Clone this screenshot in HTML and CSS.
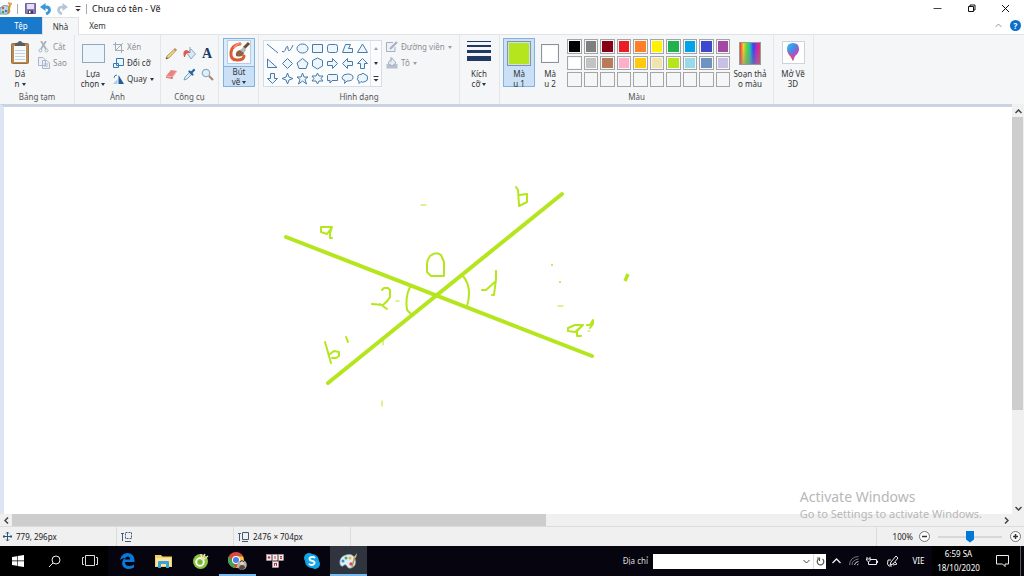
FILE: index.html
```html
<!DOCTYPE html>
<html lang="vi">
<head>
<meta charset="utf-8">
<title>Chưa có tên - Vẽ</title>
<link rel="stylesheet" href="styles.css">
</head>
<body>
<header class="titlebar">
  <svg class="app-icon" width="13" height="14" viewBox="0 0 13 14"><path d="M0 6Q3 2 8 4L10 9Q9 13 4 12L0 12Z" fill="#b9d9ea" stroke="#6f9eb8"/><circle cx="3" cy="6" r="1.3" fill="#d75b35"/><circle cx="3" cy="10" r="1.3" fill="#46a045"/><circle cx="6" cy="9" r="1.2" fill="#3878c3"/><path d="M10 2L8 12" stroke="#d28c32" stroke-width="2"/><path d="M8 1L12 2" stroke="#e4a84d" stroke-width="2"/></svg>
  <span class="bar-sep"></span>
  <button class="quick" aria-label="Lưu"><svg width="11" height="11" viewBox="0 0 11 11"><path d="M.5.5H10.500V10.500H.5Z" fill="#8e78ba" stroke="#75619f"/><path d="M2 1H9V6H2Z" fill="#e4def0"/><path d="M3 7.500H8V10.500H3Z" fill="#3c355c"/><path d="M4 8H5.500V10H4Z" fill="#fff"/></svg></button>
  <button class="quick" aria-label="Hoàn tác"><svg width="12" height="12" viewBox="0 0 12 12"><path d="M3 4H6Q9.500 4 9.500 7Q9.500 9.500 6 11" fill="none" stroke="#3a97d8" stroke-width="2.800"/><path d="M0 4L5.500 0V8Z" fill="#3a97d8"/></svg></button>
  <button class="quick" aria-label="Làm lại"><svg width="12" height="12" viewBox="0 0 12 12"><path d="M9 4H6Q2.500 4 2.500 7Q2.500 9.500 6 11" fill="none" stroke="#b4c6d8" stroke-width="2.600"/><path d="M12 4L6.500 0V8Z" fill="#b4c6d8"/></svg></button>
  <button class="quick" aria-label="Tùy chỉnh"><svg width="6" height="6" viewBox="0 0 6 6"><path d="M.5.5H5.500" stroke="#333"/><path d="M.5 3H5.500L3 5.500Z" fill="#333"/></svg></button>
  <span class="bar-sep"></span>
  <h1 class="title">Chưa có tên - Vẽ</h1>
  <div class="window-buttons">
    <button aria-label="Thu nhỏ"><svg width="9" height="9" viewBox="0 0 9 9"><path d="M.5 4.500H8.500" stroke="#444"/></svg></button>
    <button aria-label="Khôi phục"><svg width="9" height="9" viewBox="0 0 9 9" fill="none" stroke="#111"><path d="M1.500 2.500H6.500V7.500H1.500ZM3 2.500V1H8V6H6.500"/></svg></button>
    <button aria-label="Đóng"><svg width="9" height="9" viewBox="0 0 9 9"><path d="M1 1L8 8M8 1L1 8" stroke="#111"/></svg></button>
  </div>
</header>
<nav class="tabs">
  <button class="tab tab-file">Tệp</button>
  <button class="tab tab-active">Nhà</button>
  <button class="tab">Xem</button>
  <div class="tab-tools">
    <button aria-label="Thu gọn dải băng"><svg width="7" height="5" viewBox="0 0 7 5"><path d="M.5 4L3.500 1L6.500 4" fill="none" stroke="#999"/></svg></button>
    <button class="help" aria-label="Trợ giúp">?</button>
  </div>
</nav>
<section class="ribbon">
  <div class="group g-clip">
    <div class="group-body">
      <button class="big"><svg width="20" height="25" viewBox="0 0 20 25"><rect x="1.500" y="2.500" width="17" height="20" rx="1" fill="#b98a50" stroke="#9a7140"/><rect x="4" y="5" width="12" height="16" fill="#f7fafd"/><path d="M5 9.500H15M5 12.500H15M5 15.500H15M5 18.500H15" stroke="#c3d3e3"/><path d="M5 3Q5 1.500 8 1.500Q8 0 10 0Q12 0 12 1.500Q15 1.500 15 3V5H5Z" fill="#5b5d60"/></svg><span>Dá<br>n <i class="caret"></i></span></button>
      <div class="stack">
        <button class="small off"><svg width="12" height="12" viewBox="0 0 12 12" fill="none" stroke="#a6b2c0"><path d="M3 0L8 8M8 0L3 8" stroke-width="1.800"/><circle cx="2.500" cy="9.500" r="1.500"/><circle cx="8.500" cy="9.500" r="1.500"/></svg>Cắt</button>
        <button class="small off"><svg width="12" height="12" viewBox="0 0 12 12" fill="#edf1f7" stroke="#aab7ca"><path d="M.5.5H5L7.500 3V8.500H.5ZM4.500 3.500H9L11.500 6V11.500H4.500ZM6 7H10M6 9H10"/></svg>Sao</button>
      </div>
    </div>
    <div class="group-label">Bảng tạm</div>
  </div>
  <div class="group g-image">
    <div class="group-body">
      <button class="big"><svg width="23" height="25" viewBox="0 0 23 25"><rect x=".5" y="3.500" width="22" height="18" fill="#edf5fc" stroke="#315a87" stroke-dasharray="1 1"/></svg><span>Lựa<br>chọn <i class="caret"></i></span></button>
      <div class="stack">
        <button class="small off"><svg width="11" height="11" viewBox="0 0 11 11" fill="none" stroke="#a1acba"><path d="M0 2.500H8.500V11M2.500 0V8.500H11M2.500 8.500L10 1"/></svg>Xén</button>
        <button class="small"><svg width="11" height="11" viewBox="0 0 11 11" fill="#e9f5ff" stroke="#3a78b3"><path d="M3.500.5H10.500V7.500H3.500ZM.5 5.500H5.500V9.500H.5Z"/></svg>Đổi cỡ</button>
        <button class="small"><svg width="11" height="11" viewBox="0 0 11 11"><path d="M5.500 1V10H11Z" fill="#225d99"/><path d="M4.500 5V10H0Z" fill="#a9cce8"/><path d="M1 4Q1 1 4 1" fill="none" stroke="#3587bd"/></svg>Quay <i class="caret"></i></button>
      </div>
    </div>
    <div class="group-label">Ảnh</div>
  </div>
  <div class="group g-tools">
    <div class="group-body">
      <div class="tool-grid">
        <button aria-label="Bút chì"><svg width="13" height="13" viewBox="0 0 13 13"><path d="M1 12L2 9L10 1.500L11.500 3L4 11Z" fill="#ecd58a" stroke="#a88a4c" stroke-width=".8"/><path d="M9.500 2L11 3.500" stroke="#d2827c" stroke-width="1.800"/><path d="M1 12L1.700 10L3 11.300Z" fill="#444"/></svg></button>
        <button aria-label="Tô màu"><svg width="13" height="13" viewBox="0 0 13 13"><path d="M4 6L8 2L12.500 7L8 12Z" fill="#d6e9f8" stroke="#86a9c6"/><path d="M1 10Q-1 3 4 3L8 6L5 6Q3 6 2 10Z" fill="#dc5b50"/><path d="M7 0V5" stroke="#8fa3ba"/></svg></button>
        <button class="text-tool" aria-label="Văn bản">A</button>
        <button aria-label="Cục tẩy"><svg width="13" height="13" viewBox="0 0 13 13"><path d="M1 8L6 2L12 3L8 9L7 11L1 10Z" fill="#e58583"/><path d="M1 8L7 9L12 3" fill="none" stroke="#f5b6b0"/><path d="M7 9V11" stroke="#c0606a"/></svg></button>
        <button aria-label="Chọn màu"><svg width="13" height="13" viewBox="0 0 13 13"><path d="M1 12L2 9L7 4L9 6L4 11Z" fill="#d9edf9" stroke="#7ba3c4"/><path d="M6.500 3.500L9.500 6.500M8 5L11 2" stroke="#2d649e" stroke-width="2.300" stroke-linecap="round"/></svg></button>
        <button aria-label="Kính lúp"><svg width="13" height="13" viewBox="0 0 13 13"><circle cx="5" cy="5" r="3.700" fill="#dceffc" stroke="#94a9bc" stroke-width="1.200"/><path d="M8 8L12 12" stroke="#a98272" stroke-width="2"/></svg></button>
      </div>
    </div>
    <div class="group-label">Công cụ</div>
  </div>
  <div class="group g-brush">
    <div class="group-body">
      <button class="big picked"><svg class="lid" width="24" height="24" viewBox="0 0 24 24"><rect x=".5" y=".5" width="23" height="23" fill="#fafcfe" stroke="#b7cde2"/><path d="M13 4Q5 5 4 12Q3 20 10 20Q17 20 17 16" fill="none" stroke="#dd5a33" stroke-width="3" stroke-linecap="round"/><path d="M14 3Q9 4 7 8" fill="none" stroke="#ee9272" stroke-width="2"/><path d="M17 8L22 3" stroke="#6e4a33" stroke-width="3"/><path d="M13 10L17 7L19 10L17 13Z" fill="#b5b9bd"/><path d="M9 16Q8 11 13 10L17 13Q16 18 9 16Z" fill="#8c6240"/></svg><span>Bút<br>vẽ <i class="caret"></i></span></button>
    </div>
  </div>
  <div class="group g-shapes">
    <div class="group-body">
      <div class="gallery">
        <div class="shape-grid">
          <button aria-label="Đường thẳng"><svg viewBox="0 0 13 13"><path d="M1 2L12 11"/></svg></button>
          <button aria-label="Đường cong"><svg viewBox="0 0 13 13"><path d="M1 9Q3 12 5 6Q7 2 7 7Q8 12 12 3"/></svg></button>
          <button aria-label="Hình bầu dục"><svg viewBox="0 0 13 13"><ellipse cx="6.500" cy="6.500" rx="5.500" ry="4.500"/></svg></button>
          <button aria-label="Hình chữ nhật"><svg viewBox="0 0 13 13"><path d="M1.500 2.500H11.500V10.500H1.500Z"/></svg></button>
          <button aria-label="Chữ nhật bo góc"><svg viewBox="0 0 13 13"><rect x="1.500" y="2.500" width="10" height="8" rx="2"/></svg></button>
          <button aria-label="Đa giác"><svg viewBox="0 0 13 13"><path d="M1.500 10.500L4.500 2.500H9.500L7.500 6.500H11.500V10.500Z"/></svg></button>
          <button aria-label="Tam giác"><svg viewBox="0 0 13 13"><path d="M1.500 10.500L6.500 2L11.500 10.500Z"/></svg></button>
          <button aria-label="Tam giác vuông"><svg viewBox="0 0 13 13"><path d="M1.500 2V10.500H11Z"/></svg></button>
          <button aria-label="Hình thoi"><svg viewBox="0 0 13 13"><path d="M6.500 1.500L11.500 6.500L6.500 11.500L1.500 6.500Z"/></svg></button>
          <button aria-label="Ngũ giác"><svg viewBox="0 0 13 13"><path d="M6.500 1.500L12 6L10 11.500H3L1 6Z"/></svg></button>
          <button aria-label="Lục giác"><svg viewBox="0 0 13 13"><path d="M6.500 1L11.500 3.500V9L6.500 12L1.500 9V3.500Z"/></svg></button>
          <button aria-label="Mũi tên phải"><svg viewBox="0 0 13 13"><path d="M1.500 4.500H6.500V1.500L11.500 6.500L6.500 11.500V8.500H1.500Z"/></svg></button>
          <button aria-label="Mũi tên trái"><svg viewBox="0 0 13 13"><path d="M11.500 4.500H6.500V1.500L1.500 6.500L6.500 11.500V8.500H11.500Z"/></svg></button>
          <button aria-label="Mũi tên lên"><svg viewBox="0 0 13 13"><path d="M4.500 11.500V6.500H1.500L6.500 1.500L11.500 6.500H8.500V11.500Z"/></svg></button>
          <button aria-label="Mũi tên xuống"><svg viewBox="0 0 13 13"><path d="M4.500 1.500V6.500H1.500L6.500 11.500L11.500 6.500H8.500V1.500Z"/></svg></button>
          <button aria-label="Sao bốn cánh"><svg viewBox="0 0 13 13"><path d="M6.500 1L8 5L12 6.500L8 8L6.500 12L5 8L1 6.500L5 5Z"/></svg></button>
          <button aria-label="Sao năm cánh"><svg viewBox="0 0 13 13"><path d="M6.500 1L8 5H12L9 7.500L10.500 12L6.500 9L2.500 12L4 7.500L1 5H5Z"/></svg></button>
          <button aria-label="Sao sáu cánh"><svg viewBox="0 0 13 13"><path d="M6.500 1L8 4H12L10 6.500L12 9H8L6.500 12L5 9H1L3 6.500L1 4H5Z"/></svg></button>
          <button aria-label="Chú thích chữ nhật"><svg viewBox="0 0 13 13"><path d="M2.500 2.500H10.500Q11.500 2.500 11.500 3.500V8.500H6L4 11V8.500H1.500V3.500Z"/></svg></button>
          <button aria-label="Chú thích bầu dục"><svg viewBox="0 0 13 13"><path d="M4 8.500Q1 8 1 5.500Q2 2 6.500 2Q12 2 12 5.500Q12 9 6 9L3.500 11.500Z"/></svg></button>
          <button aria-label="Chú thích đám mây"><svg viewBox="0 0 13 13"><path d="M3 9Q0 8 2 5.500Q1 2.500 5 2.500Q7 0 9 2.500Q12 3 11.500 6Q12 9 9 9.500Q6 11 5 9.500L3 11.500Z"/></svg></button>
        </div>
        <div class="gallery-scroll">
          <button aria-label="Cuộn lên"><i class="caret up"></i></button>
          <button aria-label="Cuộn xuống"><i class="caret"></i></button>
          <button aria-label="Thêm"><svg width="6" height="6" viewBox="0 0 6 6"><path d="M.5.5H5.500" stroke="#333"/><path d="M.5 3H5.500L3 5.500Z" fill="#333"/></svg></button>
        </div>
      </div>
      <div class="stack">
        <button class="small off"><svg width="12" height="12" viewBox="0 0 12 12"><path d="M9 6V10.500H.5V1.500H7" fill="#edf1f8" stroke="#a5afc1"/><path d="M4 8L11 1" stroke="#a5afc1" stroke-width="2"/></svg>Đường viền <i class="caret"></i></button>
        <button class="small off"><svg width="12" height="12" viewBox="0 0 12 12"><path d="M.5 7H11.500V11.500H.5Z" fill="#b5bfce"/><path d="M2 6L6 1L10 6L6 9Z" fill="#e7edf5" stroke="#a5afc1"/><path d="M5 0V5" stroke="#a5afc1"/></svg>Tô <i class="caret"></i></button>
      </div>
    </div>
    <div class="group-label">Hình dạng</div>
  </div>
  <div class="group g-size">
    <div class="group-body">
      <button class="big"><svg width="24" height="25" viewBox="0 0 24 25" fill="#203864"><path d="M0 0H24V1H0ZM0 4H24V6H0ZM0 9H24V12H0ZM0 15H24V20H0Z"/></svg><span>Kích<br>cỡ <i class="caret"></i></span></button>
    </div>
  </div>
  <div class="group g-colors">
    <div class="group-body">
      <button class="big picked color-one"><span class="chip chip-large"></span><span>Mà<br>u 1</span></button>
      <button class="big color-two"><span class="chip chip-small"></span><span>Mà<br>u 2</span></button>
      <div class="swatches">
        <button style="background-color:#000" aria-label="Đen"></button><button style="background-color:#7f7f7f" aria-label="Xám"></button><button style="background-color:#880015" aria-label="Đỏ sẫm"></button><button style="background-color:#ed1c24" aria-label="Đỏ"></button><button style="background-color:#ff7f27" aria-label="Cam"></button><button style="background-color:#fff200" aria-label="Vàng"></button><button style="background-color:#22b14c" aria-label="Lục"></button><button style="background-color:#00a2e8" aria-label="Lam"></button><button style="background-color:#3f48cc" aria-label="Chàm"></button><button style="background-color:#a349a4" aria-label="Tím"></button>
        <button style="background-color:#fff" aria-label="Trắng"></button><button style="background-color:#c3c3c3" aria-label="Xám nhạt"></button><button style="background-color:#b97a57" aria-label="Nâu"></button><button style="background-color:#ffaec9" aria-label="Hồng"></button><button style="background-color:#ffc90e" aria-label="Vàng kim"></button><button style="background-color:#efe4b0" aria-label="Vàng nhạt"></button><button style="background-color:#b5e61d" aria-label="Vàng chanh"></button><button style="background-color:#99d9ea" aria-label="Lam nhạt"></button><button style="background-color:#7092be" aria-label="Lam xám"></button><button style="background-color:#c8bfe7" aria-label="Oải hương"></button>
        <button class="empty" aria-label="Trống 1"></button><button class="empty" aria-label="Trống 2"></button><button class="empty" aria-label="Trống 3"></button><button class="empty" aria-label="Trống 4"></button><button class="empty" aria-label="Trống 5"></button><button class="empty" aria-label="Trống 6"></button><button class="empty" aria-label="Trống 7"></button><button class="empty" aria-label="Trống 8"></button><button class="empty" aria-label="Trống 9"></button><button class="empty" aria-label="Trống 10"></button>
      </div>
      <button class="big edit-colors"><span class="rainbow"></span><span>Soạn thả<br>o màu</span></button>
    </div>
    <div class="group-label">Màu</div>
  </div>
  <div class="group g-3d">
    <div class="group-body">
      <button class="big"><svg width="24" height="25" viewBox="0 0 24 25"><defs><linearGradient id="drop" x1="0" y1="0" x2="1" y2="1"><stop offset="0" stop-color="#20c7ee"/><stop offset=".4" stop-color="#4a8ae5"/><stop offset=".7" stop-color="#b44ac8"/><stop offset="1" stop-color="#e94455"/></linearGradient></defs><rect x="1.500" y=".5" width="22" height="22" fill="#fff" stroke="#ccd3da"/><path d="M12 2Q18 2 18 8Q18 12 14 15L12 20L10 16Q6 12 6 8Q6 2 12 2Z" fill="url(#drop)"/><path d="M6 9Q7 13 10 16L12 20L13 15Q9 14 6 9Z" fill="#e34c75"/></svg><span>Mở Vẽ<br>3D</span></button>
    </div>
  </div>
</section>
<main class="workspace">
  <div class="paper">
    <svg class="drawing" width="1008" height="407" viewBox="4 107 1008 407" role="img" aria-label="Hai đường thẳng aa' và bb' cắt nhau tại O">
      <g class="thick"><path d="M286 237L592 356"/><path d="M562 194L328 383"/></g>
      <g class="pen">
        <path d="M410 287Q405 297 407 310L412 315"/>
        <path d="M463 276Q469 283 469 293Q469 300 467 306"/>
        <path d="M332 227H321V232L327 234L330 230L332 227L330 233V238L332 238"/>
        <path d="M430 256Q436 251 441 255L444 262V276H431L427 272V264Q427 260 430 256Z"/>
        <path d="M382 290L384 288L388 288L390 290V297Q388 301 383 305L372 304M380 304L387 309"/>
        <path d="M325 342L331 363M330 354L334 351L339 352V356L336 358H332M346 337L348 342"/>
        <path d="M516 187L518 190L519 205M519 195L527 194V202L519 206"/>
        <path d="M482 290L486 290L496 281M496 271V279L494 295H492"/>
        <path d="M583 325H575L568 328V331L575 332L583 325L577 331V336H581M587 325H590L593 320V324L590 328"/>
      </g>
      <g class="thin"><path d="M421 205H426M383 340V345M382 401V406M396 301H399M558 306H563M588 331H590"/></g>
      <circle cx="552" cy="265" r="1" fill="#b5e61d"/><circle cx="560" cy="282" r="1" fill="#b5e61d"/>
      <path d="M628 274L625 281" fill="none" stroke="#b5e61d" stroke-width="3.500"/>
    </svg>
  </div>
  <div class="vscroll"><button aria-label="Cuộn lên trên"><svg width="7" height="5" viewBox="0 0 7 5"><path d="M.5 4L3.500 1L6.500 4"/></svg></button><div class="track"><div class="thumb"></div></div><button aria-label="Cuộn xuống dưới"><svg width="7" height="5" viewBox="0 0 7 5"><path d="M.5 1L3.500 4L6.500 1"/></svg></button></div>
  <div class="hscroll"><button aria-label="Cuộn sang trái"><svg width="5" height="7" viewBox="0 0 5 7"><path d="M4 .5L1 3.500L4 6.500"/></svg></button><div class="track"><div class="thumb"></div></div><button aria-label="Cuộn sang phải"><svg width="5" height="7" viewBox="0 0 5 7"><path d="M1 .5L4 3.500L1 6.500"/></svg></button></div>
  <div class="watermark"><p class="wm-title">Activate Windows</p><p class="wm-text">Go to Settings to activate Windows.</p></div>
</main>
<footer class="status">
  <div class="cell"><svg width="9" height="9" viewBox="0 0 9 9" fill="none" stroke="#315278"><path d="M0 4.500H9M4.500 0V9M3 1.500L4.500 0L6 1.500M3 7.500L4.500 9L6 7.500M1.500 3L0 4.500L1.500 6M7.500 3L9 4.500L7.500 6"/></svg>779, 296px</div>
  <div class="cell"><svg width="11" height="10" viewBox="0 0 11 10" fill="none" stroke="#425a76"><path d="M1.500 1V9M0 1.500H3M4 9.500H10"/><rect x="4.500" y=".5" width="6" height="6" stroke-dasharray="2 1"/></svg></div>
  <div class="cell"><svg width="11" height="10" viewBox="0 0 11 10" fill="none" stroke="#425a76"><path d="M1.500 1V9M0 1.500H3M4 9.500H10M4.500.5H10.500V7.500H4.500Z"/></svg>2476 × 704px</div>
  <div class="cell cell-rest"></div>
  <div class="zoom"><label for="zoom">100%</label>
    <button aria-label="Thu nhỏ hình"><svg width="11" height="11" viewBox="0 0 11 11"><circle cx="5.500" cy="5.500" r="5" fill="#fff" stroke="#777"/><path d="M3 5.500H8" stroke="#333" stroke-width="1.500"/></svg></button>
    <input id="zoom" type="range" min="0" max="100" value="50">
    <button aria-label="Phóng to hình"><svg width="11" height="11" viewBox="0 0 11 11"><circle cx="5.500" cy="5.500" r="5" fill="#fff" stroke="#777"/><path d="M3 5.500H8M5.500 3V8" stroke="#333" stroke-width="1.500"/></svg></button>
  </div>
</footer>
<section class="taskbar">
  <button class="task sys" aria-label="Bắt đầu"><svg width="12" height="12" viewBox="0 0 12 12" fill="#fff"><path d="M0 2L5 1.200V5.600H0ZM5.600 1.100L12 0V5.600H5.600ZM0 6.300H5V10.800L0 10ZM5.600 6.300H12V12L5.600 10.900Z"/></svg></button>
  <button class="task sys" aria-label="Tìm kiếm"><svg width="13" height="13" viewBox="0 0 13 13" fill="none" stroke="#eee"><circle cx="8" cy="5" r="4"/><path d="M5 8L1 12"/></svg></button>
  <button class="task sys" aria-label="Dạng xem tác vụ"><svg width="16" height="12" viewBox="0 0 16 12" fill="none" stroke="#ddd"><path d="M3.500.5H12.500V10.500H3.500ZM2 2.500H.5V9.500H2M14 2.500H15.500V9.500H14"/></svg></button>
  <button class="task" aria-label="Edge"><svg width="16" height="16" viewBox="0 0 16 16"><path d="M1 7Q2 1 8 0Q15 0 15.500 7V9H6Q6 13 10 13Q13 13 15 11.500V14.500Q12 16 8.500 16Q3 15 3 10Q3 7 6 5Q3 5 1 7ZM6 6.500H11Q11 3.500 8.500 3.500Q6 4 6 6.500Z" fill="#0a78d6" fill-rule="evenodd"/></svg></button>
  <button class="task" aria-label="File Explorer"><svg width="17" height="14" viewBox="0 0 17 14"><path d="M0 1H6L7.500 2.500H17V13H0Z" fill="#f4cf65"/><path d="M1 4H16V12H1Z" fill="#fbe69d"/><path d="M3 14V8Q3 7 4 7H13Q14 7 14 8V14H11V10H6V14Z" fill="#3aa1dd"/></svg></button>
  <button class="task" aria-label="Cốc Cốc"><svg width="16" height="16" viewBox="0 0 16 16"><circle cx="7.500" cy="8.500" r="7.500" fill="#8ac43e"/><circle cx="7" cy="9" r="3.800" fill="none" stroke="#fff" stroke-width="1.800"/><circle cx="7" cy="9" r="1.800" fill="#6dae2c"/><path d="M9 7L8 1M9 7L12 1M10 7L15 3" stroke="#f4e6b8" stroke-width="1.500"/></svg></button>
  <button class="task open" aria-label="Chrome"><svg width="19" height="19" viewBox="0 0 19 19"><circle cx="8" cy="8" r="8" fill="#dc4a3d"/><path d="M1 4L8 16A8 8 0 0 1 1 4Z" fill="#40a451"/><path d="M8 4.500H15A8 8 0 0 1 8 16L11.500 10Z" fill="#f4c83c"/><circle cx="8" cy="8" r="4" fill="#fff"/><circle cx="8" cy="8" r="3" fill="#4285e5"/><circle cx="14" cy="13" r="4.800" fill="#b9b3a7"/><path d="M11 17Q11 13 14 13Q17 13 17 16L14 18Z" fill="#524a43"/><circle cx="14" cy="11" r="2" fill="#e5d5c2"/><path d="M12 10Q14 7 16 10" stroke="#333" fill="none"/></svg></button>
  <button class="task" aria-label="UniKey"><svg width="18" height="14" viewBox="0 0 18 14"><g fill="#f3eeee" stroke="#b9a9ad" stroke-width=".5"><rect x=".5" y=".5" width="5" height="6"/><rect x="6.500" y=".5" width="5" height="6"/><rect x="12.500" y=".5" width="5" height="6"/><rect x="6.500" y="7.500" width="6" height="6"/></g><g fill="#c6343f"><circle cx="3" cy="3.500" r="1.300"/><path d="M8.500 2H9.500V5H8.500ZM14 2H16V3L15 4H16V5H14V4L15 3H14ZM8 9H11V12H10V10H9V12H8Z"/></g></svg></button>
  <button class="task" aria-label="Skype"><svg width="16" height="16" viewBox="0 0 16 16"><circle cx="8" cy="8" r="7" fill="#10a5e7"/><circle cx="5" cy="5" r="5" fill="#10a5e7"/><circle cx="11" cy="11" r="5" fill="#10a5e7"/><path d="M11 5Q9.500 3.500 7.500 4Q5 4.500 5.500 6.500Q6 7.500 8.500 8Q11 8.500 10.500 10.500Q9.500 12 7.500 12Q5.500 12 5 10.500" fill="none" stroke="#fff" stroke-width="1.800"/></svg></button>
  <button class="task open current" aria-label="Paint"><svg width="19" height="18" viewBox="0 0 19 18"><path d="M1 12Q0 5 7 3Q14 1 16 7Q18 14 12 16Q9 17 8 14Q6 11 4 14Q2 15 1 12Z" fill="#dceef6" stroke="#8fb5c8" stroke-width=".7"/><circle cx="4" cy="9" r="1.500" fill="#438dd0"/><circle cx="7" cy="6" r="1.500" fill="#51a753"/><circle cx="11" cy="6" r="1.500" fill="#e8b336"/><circle cx="12" cy="12" r="1.700" fill="#d94b46"/><path d="M16 4L13 15" stroke="#c98b45" stroke-width="1.500"/><path d="M15 5L18 1L17 6Z" fill="#e7b464"/></svg></button>
  <div class="address"><label for="address">Địa chỉ</label><div class="address-box"><input id="address" type="text"><button aria-label="Mở danh sách"><svg width="7" height="5" viewBox="0 0 7 5"><path d="M.5 1L3.500 4L6.500 1" fill="none" stroke="#444"/></svg></button><button class="refresh" aria-label="Làm mới"><svg width="9" height="9" viewBox="0 0 9 9" fill="none" stroke="#555" stroke-width="1.200"><path d="M2.500 2A3.300 3.300 0 1 0 6.500 2M1 1H3.500V4"/></svg></button></div></div>
  <button class="tray" aria-label="Biểu tượng ẩn"><svg width="9" height="6" viewBox="0 0 9 6"><path d="M.5 5L4.500 1L8.500 5" fill="none" stroke="#eee" stroke-width="1.300"/></svg></button>
  <button class="tray" aria-label="Mạng"><svg width="10" height="10" viewBox="0 0 10 10" fill="none" stroke="#777"><path d="M.5 9Q1 1 9.500.5M3 9Q3 4 9.500 3"/><path d="M5.500 9Q6 6 9.500 5.500M8 9L9.500 8" stroke="#ccc"/></svg></button>
  <button class="tray" aria-label="Pin"><svg width="12" height="9" viewBox="0 0 12 9" fill="none" stroke="#eee"><path d="M4 2.500H10.500V7.500H2.500V5M10.500 4H11.500V6M1 0V2M4 0V2M.5 2H4.500V3L2.500 5L.5 3Z"/></svg></button>
  <button class="tray tray-wide" aria-label="Windows Ink"><svg width="12" height="12" viewBox="0 0 12 12" fill="none" stroke="#eee"><path d="M4 7L9 1L11 3L6 9L3 10ZM4 5H1L.5 9Q1 12 5 11M6 10L10 9L8 7"/></svg></button>
  <button class="lang">VIE</button>
  <button class="clock">6:59 SA<br>18/10/2020</button>
  <button class="notify" aria-label="Thông báo"><svg width="13" height="12" viewBox="0 0 13 12" fill="none" stroke="#eee"><path d="M.5.5H12.500V9H9V11.500L6.500 9H.5Z"/></svg></button>
</section>
</body>
</html>
```
FILE: styles.css
```css
* { box-sizing: border-box; }
body {
  margin: 0;
  min-height: 100vh;
  display: flex;
  flex-direction: column;
  font: 8px/10px "Noto Sans", "Open Sans", sans-serif;
  color: #333;
  background: #fff;
}
button {
  margin: 0;
  padding: 0;
  border: 0;
  background: none;
  font: inherit;
  color: inherit;
  display: flex;
  align-items: center;
  justify-content: center;
}
svg { display: block; flex: none; }
p { margin: 0; }

.titlebar { display: flex; align-items: center; height: 17px; }
.app-icon { margin-right: 4px; }
.bar-sep { width: 1px; height: 10px; background: #aaa; }
.quick { width: 16px; height: 17px; }
.quick:first-of-type { margin-left: 4px; }
.title { margin: 0 0 0 5px; font-size: 9px; line-height: 16px; font-weight: 400; color: #111; }
.window-buttons { display: flex; margin-left: auto; padding-right: 2px; }
.window-buttons button { width: 34px; height: 16px; }

.tabs { display: flex; height: 18px; border-bottom: 1px solid #e1e3e6; }
.tab { width: 37px; color: #333; }
.tab-file { width: 42px; background: #1979ca; color: #fff; }
.tab-active { background: #f5f6f7; border: 1px solid #dfe1e3; border-bottom: 0; margin-bottom: -1px; }
.tab-tools { display: flex; align-items: center; gap: 8px; margin-left: auto; padding-right: 3px; }
.help { width: 11px; height: 11px; border-radius: 50%; background: #0b6fc9; color: #fff; font-weight: 700; }

.ribbon { display: flex; height: 69px; background: #f5f6f7; }
.group { display: flex; flex-direction: column; flex: none; border-right: 1px solid #e3e5e7; }
.group-body { display: flex; flex: 1; align-items: flex-start; padding-top: 3px; }
.group-label { height: 13px; line-height: 12px; text-align: center; color: #555; }
.g-clip { width: 75px; }
.g-image { width: 86px; }
.g-tools { width: 58px; }
.g-brush { width: 40px; }
.g-shapes { width: 201px; }
.g-size { width: 40px; }
.g-colors { width: 274px; }
.g-3d { width: 40px; }

.big { flex-direction: column; justify-content: flex-start; width: 32px; height: 49px; padding-top: 2px; gap: 3px; border: 1px solid transparent; flex: none; }
.picked { background: #c9e0f7; border-color: #84b2e0; }
.g-clip .big { margin-left: 4px; }
.g-image .big { width: 36px; }
.g-brush .big { margin: 0 4px; }
.g-size .big, .g-3d .big { margin: 0 3px; }
.caret { display: inline-block; border: 2px solid transparent; border-top: 3px solid #333; border-bottom: 0; vertical-align: middle; }
.off .caret, .caret.up { opacity: .45; }
.up { transform: rotate(180deg); }
.stack { display: flex; flex-direction: column; padding-top: 1px; }
.small { justify-content: flex-start; gap: 3px; height: 16px; white-space: nowrap; }
.off { color: #8c8f94; }
.g-clip .stack, .g-image .stack { margin-left: 2px; }

.tool-grid { display: grid; grid-template-columns: repeat(3, 18px); grid-auto-rows: 21px; padding: 5px 0 0 1px; }
.text-tool { font: bold 14px/16px "Liberation Serif", serif; color: #203864; }
.g-brush .picked { padding-top: 1px; background: linear-gradient(#dcebf9 0 27px, #84b2e0 27px 28px, #c9e0f7 28px); }

.gallery { display: flex; margin: 2px 0 0 4px; border: 1px solid #d4dce6; background: #fbfcfd; }
.shape-grid { display: grid; grid-template-columns: repeat(7, 15px); grid-auto-rows: 15px; padding-left: 1px; }
.shape-grid svg { width: 13px; height: 13px; fill: #edf6fd; stroke: #4a7aa8; }
.shape-grid button:first-child svg, .shape-grid button:nth-child(2) svg { fill: none; }
.gallery-scroll { display: grid; grid-auto-rows: 15px; width: 11px; border-left: 1px solid #e1e6ec; }
.g-shapes .stack { margin-left: 4px; }

.color-one { margin-left: 3px; }
.chip { flex: none; border: 1px solid #8c9299; padding: 1px; background-clip: content-box; }
.chip-large { width: 24px; height: 25px; background-color: #b5e61d; }
.chip-small { width: 18px; height: 19px; margin: 3px 0; background-color: #fff; }
.color-two { width: 30px; }
.swatches { display: grid; grid-template-columns: repeat(10, 1fr); grid-template-rows: repeat(3, 1fr); gap: 2px; width: 163px; height: 48px; margin: 1px 0 0 2px; }
.swatches button { border: 1px solid #a5a5a5; padding: 1px; background-clip: content-box; }
.edit-colors { width: 40px; white-space: nowrap; }
.rainbow { flex: none; width: 22px; height: 23px; margin: 1px; border: 1px solid #999; background: linear-gradient(#0000 20%, #8888), linear-gradient(90deg, #e33, #fc3, #5d3, #2bb, #34e, #b2c, #e34); }

.workspace { position: relative; flex: 1; display: grid; grid-template: minmax(0, 1fr) 12px / minmax(0, 1fr) 12px; background: #f0f0f0; }
.paper { overflow: hidden; background: #fff; border-left: 4px solid #dce6f2; border-top: 3px solid #c9d3e2; }
.thick, .pen, .thin { fill: none; stroke: #b5e61d; stroke-linecap: round; stroke-linejoin: round; }
.thick { stroke-width: 4px; }
.pen { stroke-width: 2px; }
.thin { stroke-width: 1px; }
.vscroll { display: flex; flex-direction: column; padding-top: 2px; }
.vscroll button { height: 11px; }
.hscroll { display: flex; grid-row: 2; }
.hscroll button { width: 12px; }
.vscroll svg, .hscroll svg { fill: none; stroke: #444; stroke-width: 1.5; }
.track { flex: 1; }
.thumb { background: #cdcdcd; }
.vscroll .thumb { width: 11px; height: 76%; }
.hscroll .thumb { width: 54%; height: 12px; }
.watermark { position: absolute; right: 42px; bottom: 5px; color: #b7b7b7; }
.wm-title { font-size: 14px; line-height: 18px; }
.wm-text { font-size: 11px; line-height: 15px; }

.status { display: flex; height: 20px; background: #f0f0f0; border-top: 1px solid #dcdcdc; color: #222; }
.cell { display: flex; align-items: center; gap: 4px; width: 117px; padding-left: 3px; border-right: 1px solid #dcdcdc; }
.cell + .cell { padding-left: 4px; }
.cell-rest { flex: 1; }
.zoom { display: flex; align-items: center; padding: 0 3px 0 16px; gap: 6px; }
.zoom input { appearance: none; width: 68px; height: 14px; margin: 0; background: linear-gradient(#d8d8d8, #d8d8d8) center / 64px 2px no-repeat; }
.zoom input::-webkit-slider-thumb { appearance: none; width: 8px; height: 12px; background: #0078d7; clip-path: polygon(0 0, 100% 0, 100% 75%, 50% 100%, 0 75%); }

.taskbar { display: flex; align-items: stretch; height: 30px; background: #05040f; color: #fff; }
.task { width: 37px; border-bottom: 2px solid transparent; padding-top: 2px; }
.sys { width: 36px; background: #000; }
.open { border-bottom-color: #76b9ed; }
.current { background: #30343f; }
.address { display: flex; align-items: center; gap: 5px; margin-left: auto; margin-right: 1px; color: #ddd; }
.address-box { display: flex; width: 173px; height: 15px; background: #fff; }
.address-box input { flex: 1; min-width: 0; border: 0; padding: 0 2px; background: #fff; font: inherit; }
.address-box button { width: 13px; }
.address-box .refresh { border-left: 1px solid #ddd; }
.tray { width: 18px; }
.tray-wide { width: 24px; }
.lang { width: 27px; }
.clock { width: 53px; line-height: 14px; background: #000; text-align: center; }
.notify { width: 36px; margin-right: 3px; background: #000; border-right: 1px solid #555; }
```
